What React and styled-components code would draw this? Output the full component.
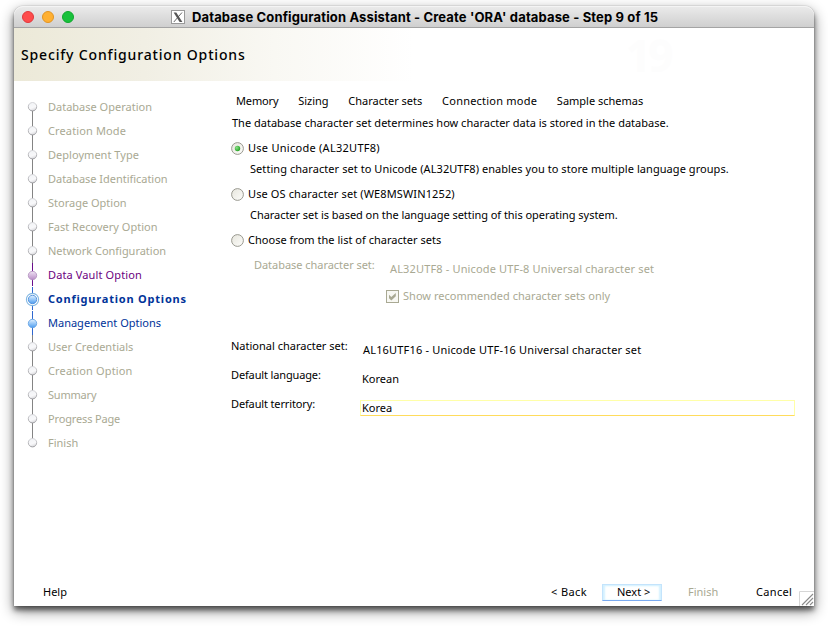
import React from 'react';
import styled, { createGlobalStyle, css } from 'styled-components';

const Global = createGlobalStyle`
  * { box-sizing: border-box; }
  html, body { margin: 0; background: #fff; }
  body { overflow: hidden; }
`;

const Desktop = styled.div`
  width: 828px;
  height: 628px;
  padding: 6px 14px 22px;
  background: #fff;
  font: 11px/15px 'Noto Sans', sans-serif;
  color: #000;
  white-space: nowrap;
`;

const Window = styled.div`
  display: flex;
  flex-direction: column;
  height: 600px;
  background: #fff;
  border-radius: 9px 9px 0 0;
  box-shadow: 0 0 1px rgba(0, 0, 0, 0.5), 0 4px 5px rgba(0, 0, 0, 0.5), 0 5px 14px rgba(0, 0, 0, 0.48);
`;

const TitleBar = styled.header`
  display: flex;
  align-items: center;
  flex: none;
  height: 22px;
  padding-left: 8px;
  border-radius: 9px 9px 0 0;
  border-bottom: 1px solid #a4a4a4;
  background: linear-gradient(#ebebeb, #cfcfcf);
  box-shadow: inset 0 1px 0 #f4f4f4;
`;

const Lights = styled.div`
  display: flex;
  gap: 8px;
`;

const Light = styled.span`
  width: 12px;
  height: 12px;
  border-radius: 50%;
  background: ${(p) => p.$fill};
  border: 1px solid ${(p) => p.$edge};
`;

const XLogo = styled.svg`
  margin: 1px 0 0 97px;
  width: 14px;
  height: 15px;
`;

const Title = styled.h1`
  margin: 1px 0 0 7px;
  font: bold 13px/20px Inter, sans-serif;
  letter-spacing: 0.14px;
`;

const Banner = styled.div`
  display: flex;
  flex: none;
  height: 53px;
  background: linear-gradient(90deg, #ece9d8 0, #f1efe4 130px, #f9f8f3 260px, #fff 400px);
`;

const Heading = styled.h2`
  flex: 1;
  margin: 0;
  padding: 17px 0 0 7px;
  font: 500 14px/20px 'Noto Sans', sans-serif;
  letter-spacing: 0.84px;
`;

const Watermark = styled.div`
  display: flex;
  width: 188px;
  padding-top: 5px;
  color: #fdfdfd;
  font: bold 44px/44px 'Open Sans', sans-serif;
  letter-spacing: -3px;
`;

const Body = styled.div`
  display: flex;
  flex: 1;
`;

const Steps = styled.ol`
  width: 217px;
  margin: 0;
  padding: 14px 0 0 9px;
  list-style: none;
`;

const lineColors = { idle: '#848484', done: '#6a0d8c', current: '#2f67cf', next: '#2f67cf' };
const labelColors = { idle: '#a9a993', done: '#6b0080', current: '#003399', next: '#003399' };

const Step = styled.li`
  display: flex;
  align-items: center;
  height: 24px;
  line-height: 24px;
  color: ${(p) => labelColors[p.$state]};
  letter-spacing: ${(p) => p.$track || 0}px;
  ${(p) =>
    p.$state === 'current' &&
    css`
      font-weight: bold;
    `}
`;

const StepMark = styled.svg`
  flex: none;
  width: 20px;
  height: 24px;
  margin-right: 5px;
`;

const Main = styled.main`
  flex: 1;
  padding: 12px 0 0;
`;

const Tabs = styled.nav`
  display: flex;
  gap: 19.75px;
  padding-left: 5px;
`;

const Tab = styled.span`
  letter-spacing: ${(p) => p.$track || 0}px;
`;

const Line = styled.div`
  height: 15px;
  margin-top: ${(p) => p.$top}px;
  padding-left: ${(p) => p.$left || 0}px;
  letter-spacing: ${(p) => p.$track || 0}px;
`;

const RadioLine = styled(Line)`
  display: flex;
  align-items: center;
`;

const RadioIcon = styled.svg`
  flex: none;
  width: 13px;
  height: 13px;
  margin: 2px 4px 0 0;
`;

const Field = styled.div`
  display: flex;
  align-items: flex-start;
  margin-top: ${(p) => p.$top}px;
  padding-left: ${(p) => p.$left || 0}px;
  color: ${(p) => (p.$disabled ? '#a9a993' : '#000')};
`;

const FieldLabel = styled.label`
  flex: none;
  width: ${(p) => p.$width}px;
  letter-spacing: ${(p) => p.$track || 0}px;
`;

const FieldValue = styled.span`
  margin-top: 4px;
  letter-spacing: ${(p) => p.$track || 0}px;
`;

const FocusedValue = styled.span`
  width: 435px;
  height: 16px;
  margin: 4px 0 0 -2px;
  padding-left: 1px;
  line-height: 13px;
  border: 1px solid #ffffa8;
  border-bottom-color: #ffdc5c;
`;

const CheckLine = styled.div`
  display: flex;
  align-items: center;
  height: 15px;
  margin-top: 12px;
  padding-left: 155px;
  color: #a9a993;
  letter-spacing: 0.02px;
`;

const CheckIcon = styled.svg`
  width: 13px;
  height: 13px;
  margin: 2px 4px 0 0;
`;

const Footer = styled.footer`
  display: flex;
  flex: none;
  height: 24px;
  padding-left: 29px;
`;

const FooterButton = styled.span`
  width: ${(p) => p.$width}px;
  margin-top: 2px;
  color: ${(p) => (p.$disabled ? '#a9a993' : '#000')};
  letter-spacing: ${(p) => p.$track || 0}px;
`;

const NextButton = styled.button`
  display: flex;
  width: 60px;
  height: 17px;
  margin: 2px 26px 0 0;
  padding: 0 0 0 14px;
  border: 1px solid #c4e4fc;
  border-bottom-color: #7aaaf0;
  background: #fff;
  box-shadow: inset 2px 1px 2px #d3f1ff, inset -2px 0 2px #d3f1ff;
  font: inherit;
  line-height: 13px;
  color: #000;
`;

const Grip = styled.svg`
  width: 15px;
  height: 15px;
  margin: 9px 0 0 auto;
`;

const steps = [
  ['Database Operation', 'idle'],
  ['Creation Mode', 'idle', 0.13],
  ['Deployment Type', 'idle', 0.03],
  ['Database Identification', 'idle', -0.03],
  ['Storage Option', 'idle'],
  ['Fast Recovery Option', 'idle', 0.02],
  ['Network Configuration', 'idle', -0.02],
  ['Data Vault Option', 'done', 0.12],
  ['Configuration Options', 'current', 0.79],
  ['Management Options', 'next'],
  ['User Credentials', 'idle'],
  ['Creation Option', 'idle', 0.14],
  ['Summary', 'idle', -0.2],
  ['Progress Page', 'idle', -0.15],
  ['Finish', 'idle'],
];

function Mark({ state, first, last }) {
  const fill = { idle: 'url(#idleDot)', done: 'url(#doneDot)', current: 'url(#blueDot)', next: 'url(#blueDot)' }[state];
  const edge = { idle: 'url(#idleEdge)', done: '#b898c4', current: '#4f90dc', next: '#6aa6e4' }[state];
  const gap = state === 'done' || state === 'current' ? 23 : 24;
  return (
    <StepMark viewBox="0 0 20 24">
      <rect x="9" y={first ? 12 : 0} width="1" height={first ? 12 : last ? 10 : gap} fill={lineColors[state]} />
      {state === 'current' && <circle cx="9.5" cy="12.5" r="6.1" fill="#fff" stroke="#84b8e2" strokeWidth="1.1" />}
      <circle cx="9.5" cy={state === 'idle' ? 11.7 : 12.5} r="4.2" fill={fill} stroke={edge} strokeWidth="0.9" />
    </StepMark>
  );
}

function Radio({ checked }) {
  return (
    <RadioIcon viewBox="0 0 13 13">
      <circle cx="6.5" cy="6.5" r="5.9" fill="url(#radioFace)" stroke="#8e8e86" strokeWidth="0.9" />
      {checked && <circle cx="6.5" cy="6.5" r="2.7" fill="url(#radioDot)" />}
    </RadioIcon>
  );
}

function Gradients() {
  return (
    <defs>
      <linearGradient id="idleDot" x1="0" y1="0" x2="0.4" y2="1">
        <stop offset="0" stopColor="#f0f2f5" />
        <stop offset="0.7" stopColor="#f8f8fa" />
        <stop offset="1" stopColor="#dddde0" />
      </linearGradient>
      <linearGradient id="idleEdge" x1="0" y1="0" x2="0" y2="1">
        <stop offset="0" stopColor="#d2d2d6" />
        <stop offset="1" stopColor="#949498" />
      </linearGradient>
      <linearGradient id="doneDot" x1="0" y1="0" x2="0" y2="1">
        <stop offset="0" stopColor="#f0e4f4" />
        <stop offset="1" stopColor="#b88cc6" />
      </linearGradient>
      <linearGradient id="blueDot" x1="0" y1="0" x2="0" y2="1">
        <stop offset="0" stopColor="#e4f3ff" />
        <stop offset="1" stopColor="#4c9cf0" />
      </linearGradient>
      <linearGradient id="radioFace" x1="0" y1="0" x2="1" y2="1">
        <stop offset="0" stopColor="#e6e5dc" />
        <stop offset="1" stopColor="#fdfdfb" />
      </linearGradient>
      <radialGradient id="radioDot" cx="0.35" cy="0.35" r="0.7">
        <stop offset="0" stopColor="#8be08a" />
        <stop offset="1" stopColor="#21a121" />
      </radialGradient>
    </defs>
  );
}

export default function App() {
  return (
    <>
      <Global />
      <Desktop>
        <Window>
          <TitleBar>
            <Lights>
              <Light $fill="#fe4c4c" $edge="#e0383c" />
              <Light $fill="#ffb032" $edge="#e29422" />
              <Light $fill="#19c13c" $edge="#10a82d" />
            </Lights>
            <XLogo viewBox="0 0 14 15">
              <Gradients />
              <rect x="0.5" y="0.5" width="13" height="13" fill="#fff" stroke="#999" />
              <path d="M2.6 2.5h2.7l6.1 9.5H8.6z" fill="#555" />
              <path d="M11 2.5 2.8 12" stroke="#555" strokeWidth="0.9" />
            </XLogo>
            <Title>Database Configuration Assistant - Create 'ORA' database - Step 9 of 15</Title>
          </TitleBar>
          <Banner>
            <Heading>Specify Configuration Options</Heading>
            <Watermark>19</Watermark>
          </Banner>
          <Body>
            <Steps>
              {steps.map(([label, state, track], i) => (
                <Step key={label} $state={state} $track={track}>
                  <Mark state={state} first={i === 0} last={i === steps.length - 1} />
                  {label}
                </Step>
              ))}
            </Steps>
            <Main>
              <Tabs>
                <Tab $track={-0.15}>Memory</Tab>
                <Tab>Sizing</Tab>
                <Tab>Character sets</Tab>
                <Tab $track={0.22}>Connection mode</Tab>
                <Tab>Sample schemas</Tab>
              </Tabs>
              <Line $top={7} $left={1} $track={0.005}>
                The database character set determines how character data is stored in the database.
              </Line>
              <RadioLine $top={10} $track={0.27}><Radio checked />Use Unicode (AL32UTF8)</RadioLine>
              <Line $top={6} $left={19} $track={0.06}>
                Setting character set to Unicode (AL32UTF8) enables you to store multiple language groups.
              </Line>
              <RadioLine $top={10} $track={0.12}><Radio />Use OS character set (WE8MSWIN1252)</RadioLine>
              <Line $top={6} $left={19} $track={-0.043}>
                Character set is based on the language setting of this operating system.
              </Line>
              <RadioLine $top={10} $track={0.02}><Radio />Choose from the list of character sets</RadioLine>
              <Field $top={10} $left={23} $disabled>
                <FieldLabel $width={136} $track={-0.04}>Database character set:</FieldLabel>
                <FieldValue $track={0.15}>AL32UTF8 - Unicode UTF-8 Universal character set</FieldValue>
              </Field>
              <CheckLine>
                <CheckIcon viewBox="0 0 13 13">
                  <rect x="0.5" y="0.5" width="12" height="12" fill="#f8f8f3" stroke="#a9a993" />
                  <path d="M3 4.8 5.3 7 9.8 2.9V6.2L5.3 10.5 3 8.2z" fill="#a9a993" />
                </CheckIcon>
                Show recommended character sets only
              </CheckLine>
              <Field $top={35}>
                <FieldLabel $width={132}>National character set:</FieldLabel>
                <FieldValue $track={0.175}>AL16UTF16 - Unicode UTF-16 Universal character set</FieldValue>
              </Field>
              <Field $top={10}>
                <FieldLabel $width={131} $track={-0.14}>Default language:</FieldLabel>
                <FieldValue>Korean</FieldValue>
              </Field>
              <Field $top={10}>
                <FieldLabel $width={131} $track={-0.14}>Default territory:</FieldLabel>
                <FocusedValue>Korea</FocusedValue>
              </Field>
            </Main>
          </Body>
          <Footer>
            <FooterButton $width={508}>Help</FooterButton>
            <FooterButton $width={51} $track={0.4}>&lt; Back</FooterButton>
            <NextButton>Next &gt;</NextButton>
            <FooterButton $width={68} $disabled>Finish</FooterButton>
            <FooterButton $width={42} $track={0.34}>Cancel</FooterButton>
            <Grip viewBox="0 0 15 15">
              <path d="M0.5 15V0.5H15" fill="none" stroke="#d6d6d6" />
              <path d="M3 14 14 3M7 14 14 7M11 14 14 11" stroke="#8c8c8c" strokeWidth="1.1" />
            </Grip>
          </Footer>
        </Window>
      </Desktop>
    </>
  );
}
